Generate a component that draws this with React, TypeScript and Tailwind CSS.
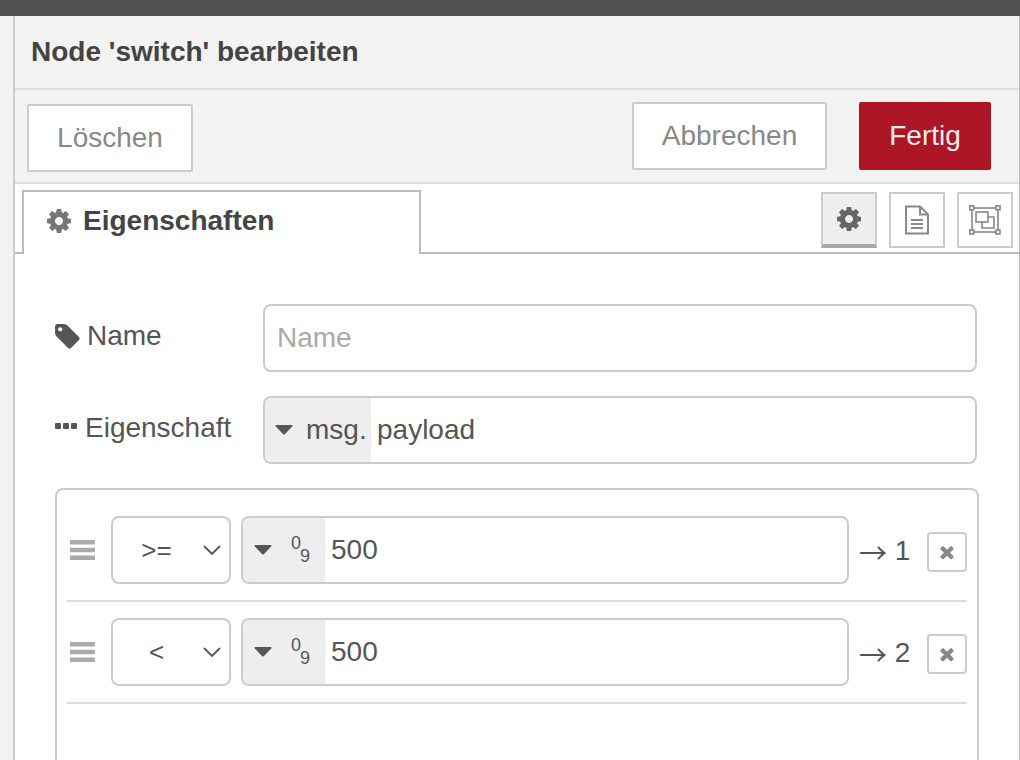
import React from "react";

const COG = "M1152 896q0-106-75-181t-181-75-181 75-75 181 75 181 181 75 181-75 75-181zm512-109v222q0 12-8 23t-20 13l-185 28q-19 54-39 91 35 50 107 138 10 12 10 25t-9 23q-27 37-99 108t-94 71q-12 0-26-9l-138-108q-44 23-91 38-16 136-29 186-7 28-36 28h-222q-14 0-24.500-8.500t-11.500-21.500l-28-184q-49-16-90-37l-141 107q-10 9-25 9-14 0-25-11-126-114-165-168-7-10-7-23 0-12 8-23 15-21 51-66.500t54-70.500q-27-50-41-99l-183-27q-13-2-21-12.500t-8-23.500v-222q0-12 8-23t19-13l186-28q14-46 39-92-40-57-107-138-10-12-10-24 0-10 9-23 26-36 98.500-107.500t94.500-71.500q13 0 26 10l138 107q44-23 91-38 16-136 29-186 7-28 36-28h222q14 0 24.500 8.500t11.500 21.500l28 184q49 16 90 37l142-107q9-9 24-9 13 0 25 10 129 119 165 170 7 8 7 22 0 12-8 23-15 21-51 66.500t-54 70.500q26 50 41 98l183 28q13 2 21 12.500t8 23.500z";
const TAG = "M576 448q0-53-37.500-90.500t-90.500-37.500-90.500 37.500-37.500 90.500 37.500 90.500 90.500 37.500 90.500-37.500 37.500-90.500zm1067 576q0 53-37 90l-491 492q-39 37-91 37-53 0-90-37l-715-716q-38-37-64.500-101t-26.500-117v-416q0-52 38-90t90-38h416q53 0 117 26.500t102 64.500l715 714q37 39 37 91z";
const TIMES = "M1490 1322q0 40-28 68l-136 136q-28 28-68 28t-68-28l-294-294-294 294q-28 28-68 28t-68-28l-136-136q-28-28-28-68t28-68l294-294-294-294q-28-28-28-68t28-68l136-136q28-28 68-28t68 28l294 294 294-294q28-28 68-28t68 28l136 136q28 28 28 68t-28 68l-294 294 294 294q28 28 28 68z";

function FaIcon({ d, size, color }: { d: string; size: number; color: string }) {
  return (
    <svg width={size} height={size} viewBox="0 0 1792 1792" fill={color} className="shrink-0">
      <path d={d} />
    </svg>
  );
}

function FileIcon() {
  return (
    <svg width="26" height="30" viewBox="0 0 26 30" fill="none" stroke="#888" strokeWidth="2">
      <path d="M2 1.500h14l8 8v19H2z" />
      <path d="M16 1.500v8h8" />
      <path d="M7 15h12M7 19h12M7 23h12" />
    </svg>
  );
}

function AppearanceIcon() {
  return (
    <svg width="32" height="30" viewBox="0 0 32 30" fill="none" stroke="#888" strokeWidth="1.600">
      <rect x="3" y="3" width="26" height="24" />
      <rect x="0.800" y="0.800" width="4" height="4" fill="#fff" />
      <rect x="27" y="0.800" width="4" height="4" fill="#fff" />
      <rect x="0.800" y="25" width="4" height="4" fill="#fff" />
      <rect x="27" y="25" width="4" height="4" fill="#fff" />
      <rect x="7" y="7" width="12" height="10" />
      <path d="M19 12h6v11H13v-6" />
    </svg>
  );
}

function TypeCaret() {
  return (
    <svg width="18" height="10" viewBox="0 0 18 10" fill="#555" className="shrink-0">
      <path d="M1.500 0h15q1.500 0 .8 1.200L9.800 9.200q-.8.800-1.600 0L.7 1.200Q0 0 1.500 0z" />
    </svg>
  );
}

function Rule({ op, n }: { op: string; n: number }) {
  return (
    <div className="flex items-center h-[102px] pl-[3px] border-b-2 border-[#ddd]">
      <svg width="25" height="20" viewBox="0 0 25 20" fill="#aaa" className="shrink-0">
        <rect y="0" width="25" height="4.500" />
        <rect y="7.750" width="25" height="4.500" />
        <rect y="15.500" width="25" height="4.500" />
      </svg>
      <div className="ml-4 w-[120px] h-[68px] bg-white border-2 border-[#ccc] rounded-[8px] flex items-center shrink-0">
        <span className="w-[86px] text-center text-[26px] pl-[1px]">{op}</span>
        <svg width="18" height="10" viewBox="0 0 18 10" fill="none" stroke="#555" strokeWidth="1.800" className="ml-1">
          <path d="M1 1l8 8 8-8" />
        </svg>
      </div>
      <div className="ml-[10px] w-[608px] h-[68px] border-2 border-[#ccc] rounded-[8px] overflow-hidden flex shrink-0">
        <div className="w-[82px] bg-[#eee] flex items-center pl-[11px] shrink-0">
          <TypeCaret />
          <span className="ml-[19px] text-[18px] leading-none relative -top-[7px]">0</span>
          <span className="text-[18px] leading-none relative top-[6px] -ml-[1px]">9</span>
        </div>
        <span className="ml-[6px] self-center text-[28px]">500</span>
      </div>
      <span className="ml-[10px] text-[28px] w-[68px] shrink-0 relative -top-[1px]">
        <span className="font-['Noto_Sans_CJK_JP',sans-serif] relative top-[4px]">→</span> {n}
      </span>
      <div className="w-10 h-10 bg-white border-2 border-[#ccc] rounded-[4px] flex items-center justify-center shrink-0 relative top-[2px]">
        <FaIcon d={TIMES} size={20} color="#888" />
      </div>
    </div>
  );
}

export default function App() {
  return (
    <div className="w-[1020px] h-[760px] overflow-hidden flex flex-col bg-white text-[#555] font-['Liberation_Sans',Arial,sans-serif]">
      <div className="h-[16px] bg-[#505050] shrink-0" />
      <div className="flex-1 flex min-h-0">
        <div className="w-[15px] shrink-0 bg-[#f3f3f3] border-r-2 border-[#ccc]" />
        <div className="flex-1 flex flex-col min-w-0 border-r border-[#bbb]">
          {/* Titel */}
          <div className="h-[74px] shrink-0 bg-[#f3f3f3] border-b-2 border-[#ddd] pl-[16px] flex items-center">
            <span className="text-[28px] font-bold text-[#444]">Node 'switch' bearbeiten</span>
          </div>
          {/* Aktionen */}
          <div className="h-[94px] shrink-0 bg-[#f3f3f3] border-b-2 border-[#ddd] flex items-start pt-3 pl-3 pr-7">
            <button className="mt-[2px] w-[166px] h-[68px] bg-white border-2 border-[#ccc] rounded-[2px] text-[28px] text-[#888]">Löschen</button>
            <button className="ml-auto w-[195px] h-[68px] bg-white border-2 border-[#ccc] rounded-[2px] text-[28px] text-[#888]">Abbrechen</button>
            <button className="ml-8 w-[132px] h-[68px] bg-[#ad1625] rounded-[2px] text-[28px] text-[#eee]">Fertig</button>
          </div>
          {/* Tabs */}
          <div className="h-[70px] shrink-0 flex items-start pt-[6px] border-b-2 border-[#bbb] pl-[7px] pr-[6px]">
            <div className="w-[399px] h-[64px] bg-white border-2 border-b-0 border-[#bbb] flex items-center pl-[21px] pb-[5px] relative">
              <FaIcon d={COG} size={28} color="#777" />
              <span className="ml-[10px] text-[28px] font-bold text-[#444]">Eigenschaften</span>
            </div>
            <div className="ml-auto flex gap-3 pt-[2px]">
              <div className="w-[56px] h-[56px] bg-[#eee] border-2 border-b-[4px] border-[#ccc] border-b-[#aaa] flex items-center justify-center">
                <FaIcon d={COG} size={28} color="#666" />
              </div>
              <div className="w-[56px] h-[56px] bg-white border-2 border-[#ccc] flex items-center justify-center">
                <FileIcon />
              </div>
              <div className="w-[56px] h-[56px] bg-white border-2 border-[#ccc] flex items-center justify-center">
                <AppearanceIcon />
              </div>
            </div>
          </div>
          {/* Formular */}
          <div className="flex-1 min-h-0 pt-[50px] pl-10 pr-[40px]">
            <div className="flex items-center h-[68px]">
              <div className="w-[208px] flex items-center shrink-0 pb-[4px]">
                <span className="w-[32px] -ml-[2px] mr-[2px] flex justify-start"><FaIcon d={TAG} size={29} color="#555" /></span>
                <span className="text-[28px]">Name</span>
              </div>
              <div className="w-[714px] h-[68px] bg-white border-2 border-[#ccc] rounded-[8px] flex items-center pl-3">
                <span className="text-[28px] text-[#aaa]">Name</span>
              </div>
            </div>
            <div className="mt-6 flex items-center h-[68px]">
              <div className="w-[208px] flex items-center shrink-0 pb-[5px]">
                <svg width="22" height="6" viewBox="0 0 22 6" fill="#555" className="mr-2 mb-[3px] shrink-0">
                  <rect x="0" width="6" height="6" rx="1" />
                  <rect x="8" width="6" height="6" rx="1" />
                  <rect x="16" width="6" height="6" rx="1" />
                </svg>
                <span className="text-[28px]">Eigenschaft</span>
              </div>
              <div className="w-[714px] h-[68px] border-2 border-[#ccc] rounded-[8px] overflow-hidden flex">
                <div className="w-[106px] bg-[#eee] flex items-center pl-[10px] shrink-0">
                  <TypeCaret />
                  <span className="ml-[13px] text-[28px]">msg.</span>
                </div>
                <span className="ml-[6px] self-center text-[28px]">payload</span>
              </div>
            </div>
            <div className="mt-6 w-[924px] h-[400px] bg-white border-2 border-[#ccc] rounded-[8px] px-[10px] pt-[10px]">
              <Rule op=">=" n={1} />
              <Rule op="<" n={2} />
            </div>
          </div>
        </div>
      </div>
    </div>
  );
}
